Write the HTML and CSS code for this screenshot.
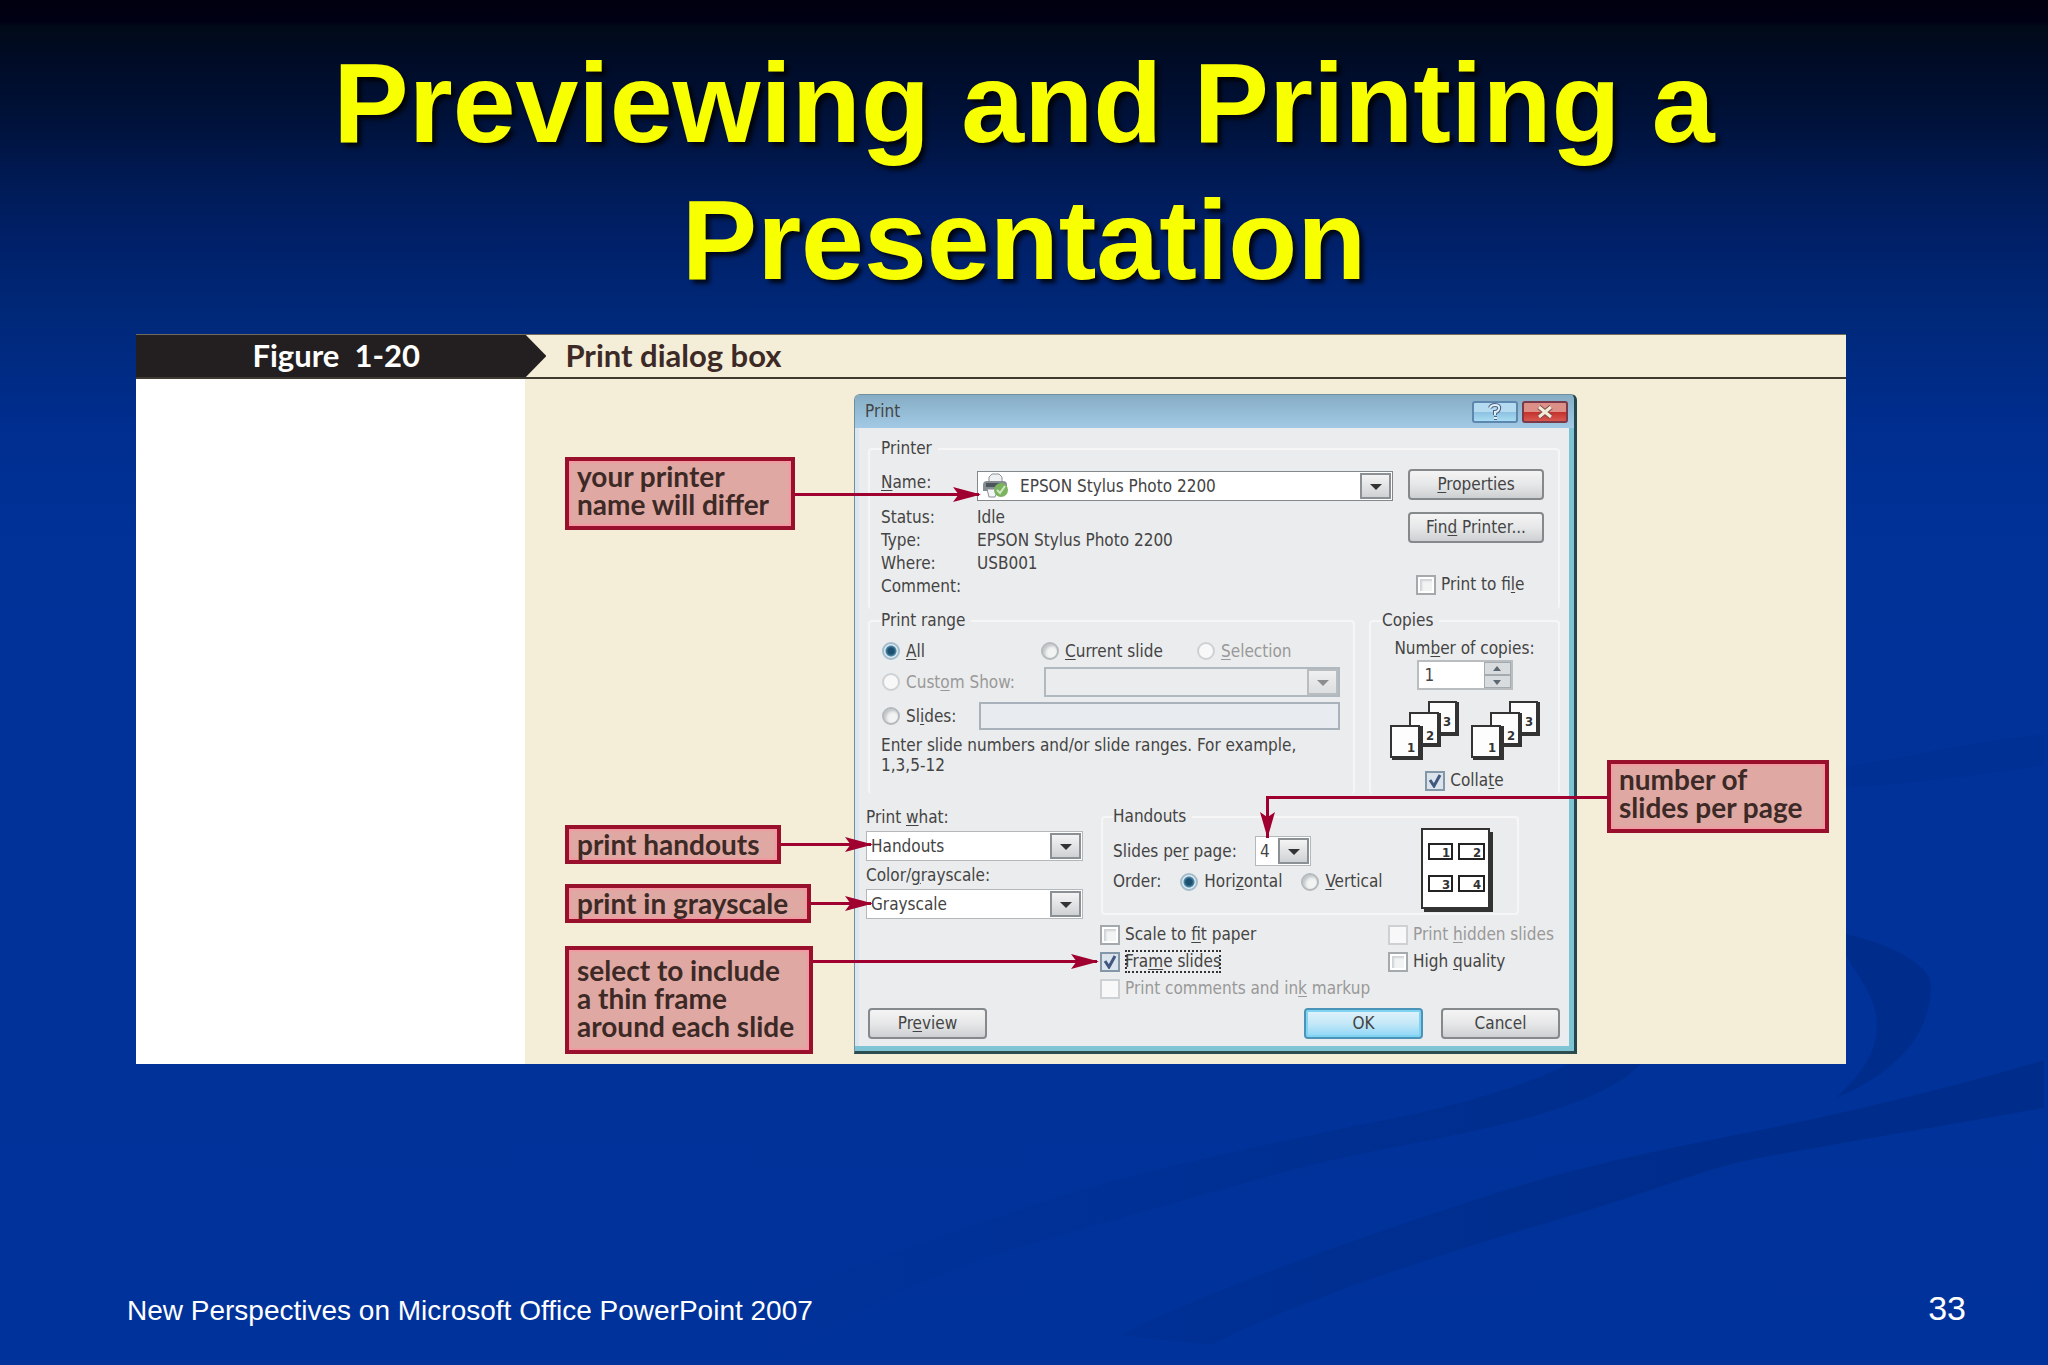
FILE: index.html
```html
<!DOCTYPE html>
<html lang="en">
<head>
    <meta charset="UTF-8">
    <meta name="viewport" content="width=device-width, initial-scale=1.0">
    <title>Previewing and Printing a Presentation</title>
    <link rel="stylesheet" href="styles.css">
</head>
<body>
    <svg class="swirls" viewBox="0 0 2048 1365" preserveAspectRatio="none" aria-hidden="true">
        <defs>
            <linearGradient id="fade" gradientUnits="userSpaceOnUse" x1="760" y1="0" x2="1700" y2="0">
                <stop offset="0" stop-color="#002d8c" stop-opacity="0"/>
                <stop offset="1" stop-color="#002d8c"/>
            </linearGradient>
        </defs>
        <path d="M1846 934 C1905 948 1931 970 1931 985 C1931 1045 1880 1080 1836 1098 C1865 1070 1880 1050 1876 1015 C1872 990 1850 965 1846 955 Z" fill="#002d8c"/>
        <path d="M2044 1060 C1960 1085 1850 1112 1760 1130 S1580 1165 1480 1198 S1220 1285 1120 1335 L1210 1345 C1290 1305 1420 1260 1540 1225 S1700 1170 1750 1160 S1950 1125 2044 1108 Z" fill="url(#fade)"/>
        <path d="M1580 1058 C1530 1085 1460 1105 1385 1120 S1140 1170 1050 1200 S780 1285 700 1340 L790 1360 C850 1310 950 1265 1060 1235 S1280 1170 1370 1152 S1610 1110 1645 1058 Z" fill="url(#fade)"/>
        <path d="M1846 767 C1920 755 1980 740 2044 735 L2044 765 C1980 775 1900 785 1846 787 Z" fill="#002d8c" opacity="0.4"/>
    </svg>

    <main class="slide">
        <h1>Previewing and Printing a<br>Presentation</h1>

        <figure class="figure">
            <figcaption class="figure-header">
                <span class="figure-number">Figure&nbsp; 1-20</span>
                <span class="figure-title">Print dialog box</span>
            </figcaption>

            <div class="figure-body">
                <div class="blank"></div>

                <div class="callouts">
                    <p class="callout printer-note">your printer<br>name will differ
                        <span class="arrow"></span></p>
                    <p class="callout handouts-note">print handouts
                        <span class="arrow"></span></p>
                    <p class="callout grayscale-note">print in grayscale
                        <span class="arrow"></span></p>
                    <p class="callout frame-note">select to include<br>a thin frame<br>around each slide
                        <span class="arrow"></span></p>
                </div>

                <form class="dialog">
                    <div class="titlebar">
                        <span class="dialog-title">Print</span>
                        <button type="button" class="help-btn" aria-label="Help">
                            <svg width="14" height="18" viewBox="0 0 14 18"><path d="M2 5 Q3 2 7 2 Q12 2 11 6 Q10 9 7 9 V12 M6 15 H9" fill="none" stroke="#4a6288" stroke-width="4"/><path d="M2 5 Q3 2 7 2 Q12 2 11 6 Q10 9 7 9 V12 M6 15 H9" fill="none" stroke="#e4eef6" stroke-width="2"/></svg>
                        </button>
                        <button type="button" class="close-btn" aria-label="Close">
                            <svg width="18" height="14" viewBox="0 0 18 14"><path d="M3 2 L15 12 M15 2 L3 12" stroke="#7c4a4a" stroke-width="5"/><path d="M3 2 L15 12 M15 2 L3 12" stroke="#f3ecd8" stroke-width="3"/></svg>
                        </button>
                    </div>

                    <div class="dialog-body">
                        <fieldset class="printer-group">
                            <legend>Printer</legend>
                            <div class="printer-info">
                                <label for="printer-name"><u>N</u>ame:</label>
                                <span class="select printer-select">
                                    <select id="printer-name"><option>EPSON Stylus Photo 2200</option></select>
                                    <svg class="printer-icon" width="28" height="26" viewBox="0 0 28 26">
                                        <path d="M8 9 V4 L11 1 H18 L21 4 V9" fill="#eef0f2" stroke="#8b9196"/>
                                        <path d="M2 12 Q2 8 6 8 H22 Q26 8 26 12 V18 H2 Z" fill="#858d92"/>
                                        <path d="M5 10 H20 V14 H5 Z" fill="#4c555b"/>
                                        <path d="M6 16 H17 L14 24 H8 Z" fill="#f4f6f8" stroke="#8b9196"/>
                                        <circle cx="20" cy="17" r="7" fill="#7bb35e"/>
                                        <path d="M16 17 L19 20 L24 13" fill="none" stroke="#d3e8c4" stroke-width="2"/>
                                    </svg>
                                </span>
                                <span>Status:</span><span>Idle</span>
                                <span>Type:</span><span>EPSON Stylus Photo 2200</span>
                                <span>Where:</span><span>USB001</span>
                                <span>Comment:</span><span></span>
                            </div>
                            <div class="printer-actions">
                                <button type="button" class="btn"><span><u>P</u>roperties</span></button>
                                <button type="button" class="btn"><span>Fin<u>d</u> Printer...</span></button>
                                <label class="check"><input type="checkbox"><span>Print to fi<u>l</u>e</span></label>
                            </div>
                        </fieldset>

                        <div class="range-row">
                            <fieldset class="range-group">
                                <legend>Print range</legend>
                                <div class="range-options">
                                    <label class="check"><input type="radio" name="range" checked><span><u>A</u>ll</span></label>
                                    <label class="check"><input type="radio" name="range"><span><u>C</u>urrent slide</span></label>
                                    <label class="check disabled"><input type="radio" name="range" disabled><span><u>S</u>election</span></label>
                                </div>
                                <div class="range-line">
                                    <label class="check disabled"><input type="radio" name="range" disabled><span>Cust<u>o</u>m Show:</span></label>
                                    <span class="select disabled-select"><select aria-label="Custom show" disabled></select></span>
                                </div>
                                <div class="range-line">
                                    <label class="check"><input type="radio" name="range"><span>Sl<u>i</u>des:</span></label>
                                    <input type="text" class="slides-input" aria-label="Slide numbers">
                                </div>
                                <p class="hint">Enter slide numbers and/or slide ranges. For example,<br>1,3,5-12</p>
                            </fieldset>

                            <fieldset class="copies-group">
                                <legend>Copies</legend>
                                <label for="copies">Num<u>b</u>er of copies:</label>
                                <span class="spinner">
                                    <input type="text" id="copies" value="1">
                                    <span class="spin-buttons">
                                        <button type="button" aria-label="More copies"><svg width="10" height="6" viewBox="0 0 10 6"><path d="M5 0 L9 5 H1 Z" fill="#5d6972"/></svg></button>
                                        <button type="button" aria-label="Fewer copies"><svg width="10" height="6" viewBox="0 0 10 6"><path d="M5 6 L9 1 H1 Z" fill="#5d6972"/></svg></button>
                                    </span>
                                </span>
                                <svg class="collate-icon" width="152" height="60" viewBox="0 0 152 60">
                                    <g id="pages" fill="#fdfdfd" stroke="#333" stroke-width="2">
                                        <path d="M67 2 H69 V34 H42 V32" fill="#333"/>
                                        <rect x="40" y="1" width="27" height="31"/>
                                        <path d="M49 13 H51 V45 H24 V43" fill="#333"/>
                                        <rect x="21" y="12" width="28" height="31"/>
                                        <path d="M31 26 H33 V58 H4 V56" fill="#333"/>
                                        <rect x="2" y="25" width="28" height="31"/>
                                    </g>
                                    <use href="#pages" x="81"/>
                                    <g class="page-digits">
                                        <text x="54" y="25">3</text><text x="37" y="39">2</text><text x="18" y="51">1</text>
                                        <text x="136" y="25">3</text><text x="118" y="39">2</text><text x="99" y="51">1</text>
                                    </g>
                                </svg>
                                <label class="check"><input type="checkbox" checked><span>Colla<u>t</u>e</span></label>
                            </fieldset>
                        </div>

                        <div class="output-row">
                            <div class="output-selects">
                                <label for="print-what">Print <u>w</u>hat:</label>
                                <span class="select"><select id="print-what"><option>Handouts</option></select></span>
                                <label for="color-mode">Color/<u>g</u>rayscale:</label>
                                <span class="select"><select id="color-mode"><option>Grayscale</option></select></span>
                            </div>

                            <fieldset class="handouts-group">
                                <legend>Handouts</legend>
                                <div class="handout-options">
                                    <div class="per-page">
                                        <label for="per-page">Slides pe<u>r</u> page:</label>
                                        <span class="select small-select"><select id="per-page"><option>4</option></select></span>
                                    </div>
                                    <div class="order">
                                        <span>Order:</span>
                                        <label class="check"><input type="radio" name="order" checked><span>Hori<u>z</u>ontal</span></label>
                                        <label class="check"><input type="radio" name="order"><span><u>V</u>ertical</span></label>
                                    </div>
                                </div>
                                <svg class="layout-icon" width="72" height="84" viewBox="0 0 72 84">
                                    <path d="M3 4 H72 V84 H3 Z" fill="#333"/>
                                    <rect x="1" y="1" width="67" height="79" fill="#fff" stroke="#333" stroke-width="2"/>
                                    <g fill="#fff" stroke="#222" stroke-width="2">
                                        <rect x="8" y="16" width="23" height="15"/>
                                        <rect x="38" y="16" width="25" height="15"/>
                                        <rect x="8" y="48" width="23" height="15"/>
                                        <rect x="38" y="48" width="25" height="15"/>
                                    </g>
                                    <g class="page-digits">
                                        <text x="21" y="29">1</text><text x="52" y="29">2</text>
                                        <text x="21" y="61">3</text><text x="52" y="61">4</text>
                                    </g>
                                </svg>
                            </fieldset>
                        </div>

                        <div class="check-grid">
                            <label class="check"><input type="checkbox"><span>Scale to <u>f</u>it paper</span></label>
                            <label class="check disabled"><input type="checkbox" disabled><span>Print <u>h</u>idden slides</span></label>
                            <label class="check focused"><input type="checkbox" checked><span>Fra<u>m</u>e slides</span></label>
                            <label class="check"><input type="checkbox"><span>High <u>q</u>uality</span></label>
                            <label class="check disabled"><input type="checkbox" disabled><span>Print comments and in<u>k</u> markup</span></label>
                        </div>

                        <div class="dialog-buttons">
                            <button type="button" class="btn preview-btn"><span>Pr<u>e</u>view</span></button>
                            <button type="submit" class="btn ok-btn">OK</button>
                            <button type="button" class="btn">Cancel</button>
                        </div>
                    </div>
                </form>

                <div class="callouts-right">
                    <p class="callout pages-note">number of<br>slides per page
                        <span class="arrow-elbow"></span></p>
                </div>
            </div>
        </figure>

        <footer class="slide-footer">
            <span>New Perspectives on Microsoft Office PowerPoint 2007</span>
            <span class="page-number">33</span>
        </footer>
    </main>
</body>
</html>
```
FILE: styles.css
```css
* {
    margin: 0;
    padding: 0;
    box-sizing: border-box;
}

body {
    min-height: 100vh;
    background: linear-gradient(#000010 0, #000014 22px, #000a18 26px, #000c28 65px, #00123a 120px, #001a54 180px, #002068 240px, #002878 310px, #002e90 430px, #003298 560px, #00329b 100%);
    font-family: "Liberation Sans", Arial, sans-serif;
}

.swirls {
    position: absolute;
    top: 0;
    left: 0;
    width: 100%;
    height: 100%;
}

.slide {
    position: relative;
    min-height: 100vh;
    display: flex;
    flex-direction: column;
}

h1 {
    padding-top: 35px;
    color: #f8ff00;
    font-size: 113px;
    line-height: 137px;
    text-align: center;
    text-shadow: 4px 4px 4px rgba(0, 0, 0, 0.8);
}

/* Figure */

.figure {
    margin: 25px 202px 0 136px;
    background: #f4edd8;
    font-family: Lato, "Open Sans", sans-serif;
    font-weight: bold;
    color: #3d2a26;
}

.figure-header {
    display: flex;
    height: 45px;
    border-top: 1px solid #6e6a5c;
    border-bottom: 2px solid #3f3a30;
    font-size: 31px;
    line-height: 40px;
}

.figure-number {
    width: 24%;
    padding-right: 10px;
    background: #231f20;
    clip-path: polygon(0 0, 95% 0, 100% 50%, 95% 100%, 0 100%);
    color: #fff;
    text-align: center;
}

.figure-title {
    padding-left: 19px;
}

.figure-body {
    display: grid;
    grid-template-columns: 389fr 329fr 723fr 269fr;
}

.blank {
    background: #fff;
}

.callouts {
    display: flex;
    flex-direction: column;
    align-items: flex-start;
    padding: 78px 0 0 40px;
}

.callout {
    position: relative;
    z-index: 1;
    margin-bottom: 20px;
    padding: 1px 8px 2px;
    border: 4px solid #99102c;
    background: #dfa8a3;
    box-shadow: inset 0 0 3px 1px #ff8fa0;
    font-size: 28px;
    line-height: 28px;
    white-space: nowrap;
}

.printer-note {
    min-width: 230px;
    margin-bottom: 295px;
    padding-bottom: 8px;
}

.handouts-note {
    min-width: 216px;
}

.grayscale-note {
    min-width: 246px;
}

.frame-note {
    min-width: 248px;
    margin: 3px 0 0;
    padding: 6px 8px 10px;
}

.callouts-right {
    padding: 381px 0 0 30px;
}

.pages-note {
    width: fit-content;
    min-width: 222px;
    padding-bottom: 8px;
}

.arrow {
    position: absolute;
    left: calc(100% + 4px);
    bottom: 14px;
    height: 3px;
    background: #a00030;
}

.arrow::after {
    content: "";
    position: absolute;
    right: -2px;
    top: -6px;
    width: 28px;
    height: 15px;
    background: #a00030;
    clip-path: polygon(0 0, 100% 50%, 0 100%, 20% 50%);
}

.printer-note .arrow { width: 184px; bottom: 30px; }
.handouts-note .arrow { width: 90px; }
.grayscale-note .arrow { width: 60px; }
.frame-note .arrow { width: 284px; bottom: 87px; }

.arrow-elbow {
    position: absolute;
    right: calc(100% + 4px);
    top: 32px;
    width: 341px;
    height: 42px;
    border-top: 3px solid #a00030;
    border-left: 3px solid #a00030;
}

.arrow-elbow::after {
    content: "";
    position: absolute;
    left: -9px;
    bottom: 0;
    width: 15px;
    height: 26px;
    background: #a00030;
    clip-path: polygon(0 0, 50% 20%, 100% 0, 50% 100%);
}

/* Print dialog */

.dialog {
    align-self: start;
    margin: 15px 0 10px;
    border: 1px solid #6f8f9f;
    border-right: 3px solid #24474f;
    border-bottom: 3px solid #2d4c50;
    border-radius: 6px 6px 0 0;
    background: #ebeced;
    box-shadow: inset -5px -5px 0 #7fc4d4, inset 4px 0 0 #dce6ef;
    font-family: "DejaVu Sans Condensed", "Noto Sans", sans-serif;
    font-size: 17px;
    font-weight: normal;
    line-height: 23px;
    color: #444;
}

.dialog u {
    text-underline-offset: 2px;
}

.dialog input,
.dialog select,
.dialog button {
    font: inherit;
    color: inherit;
}

.titlebar {
    display: flex;
    align-items: center;
    gap: 4px;
    height: 33px;
    padding: 0 6px 0 10px;
    border-radius: 5px 5px 0 0;
    background: linear-gradient(#86adc4, #a2cae6);
}

.dialog-title {
    flex: 1;
}

.help-btn,
.close-btn {
    display: flex;
    align-items: center;
    justify-content: center;
    width: 46px;
    height: 22px;
    border: 2px solid #5d87ae;
    border-radius: 3px;
    background: linear-gradient(#b5dbf0 50%, #8cc0e0 50%, #a8dcf2);
}

.close-btn {
    border-color: #7a3a48;
    background: linear-gradient(#dc9088 50%, #c4302c 50%, #d85850);
}

.dialog-body {
    padding: 9px 14px 12px 13px;
}

fieldset {
    min-width: 0;
    border: 2px solid #f6f6f6;
    border-radius: 4px;
}

legend {
    padding-right: 6px;
}

.printer-group {
    display: flex;
    justify-content: space-between;
    height: 172px;
    padding: 11px 14px 0 11px;
    border-bottom: 0;
}

.printer-info {
    display: grid;
    grid-template-columns: 96px 416px;
    grid-template-rows: 35px repeat(4, 23px);
    align-content: start;
}

.printer-actions {
    display: flex;
    flex-direction: column;
    width: 136px;
    gap: 12px;
    margin-top: -2px;
}

.printer-actions .check {
    margin: 18px 0 0 8px;
}

.select {
    position: relative;
    display: block;
    height: 30px;
}

.select select {
    display: block;
    appearance: none;
    width: 100%;
    height: 100%;
    padding: 0 30px 0 4px;
    border: 1px solid #b4b8ba;
    background: #fff;
    border-radius: 0;
}

.select::after {
    content: "";
    position: absolute;
    top: 2px;
    right: 2px;
    bottom: 2px;
    width: 27px;
    border: 2px solid #8b9094;
    background: url('data:image/svg+xml,<svg xmlns="http://www.w3.org/2000/svg" width="12" height="7"><path d="M0 1H12L6 7Z" fill="%23333"/></svg>') center no-repeat, linear-gradient(#f4f4f4, #cfd2d4);
    pointer-events: none;
}

.printer-select select {
    padding-left: 42px;
    border-color: #83888c;
}

.printer-icon {
    position: absolute;
    left: 4px;
    top: 2px;
}

.btn {
    width: 119px;
    height: 31px;
    border: 2px solid #85898c;
    border-radius: 4px;
    background: linear-gradient(#f4f4f4, #e6e7e8 50%, #cdd0d2);
}

.printer-actions .btn {
    width: 100%;
}

.check {
    display: flex;
    align-items: center;
    gap: 5px;
    white-space: nowrap;
}

.check.disabled {
    color: #999;
}

.check input {
    appearance: none;
    width: 20px;
    height: 20px;
    border: 2px solid #a3a9ad;
    background: #f2f3f3;
    box-shadow: inset 0 0 0 2px #fff, inset 4px 4px 2px 0 #cfd3d5;
}

.check input[type="radio"] {
    width: 18px;
    height: 18px;
    margin: 0 1px;
    border-color: #b4b9bc;
    border-radius: 50%;
    box-shadow: inset 2px 2px 3px #bfc3c6;
}

.check input[type="radio"]:checked {
    border-color: #a3bccb;
    background: radial-gradient(circle, #1d4f70 0 3px, #4c86a6 5px, #dcebf3 6px);
    box-shadow: none;
}

.check input[type="checkbox"]:checked {
    background: url('data:image/svg+xml,<svg xmlns="http://www.w3.org/2000/svg" width="14" height="14"><path d="M2 6L6 12L12 1" fill="none" stroke="%23405880" stroke-width="3"/></svg>') center no-repeat, #dbe4ec;
    box-shadow: none;
    border-color: #8497a8;
}

.check input:disabled,
.check input[type="radio"]:disabled {
    border-color: #ced1d3;
    background: #f8f8f8;
    box-shadow: none;
}

.range-row {
    display: flex;
    justify-content: space-between;
}

.range-group {
    width: 487px;
    height: 185px;
    padding: 5px 13px 0 11px;
    border-bottom: 0;
}

.range-options {
    display: grid;
    grid-template-columns: 159px 156px auto;
    height: 28px;
}

.range-line {
    display: flex;
    align-items: center;
    justify-content: space-between;
    height: 34px;
}

.disabled-select {
    width: 296px;
}

.disabled-select select {
    border: 2px solid #b0b8c0;
    background: #eaecee;
    opacity: 1;
}

.disabled-select::after {
    opacity: 0.5;
}

.slides-input {
    width: 361px;
    height: 28px;
    border: 2px solid #a9b2ba;
    background: #e8ebef;
}

.hint {
    padding-top: 2px;
    line-height: 20px;
    white-space: nowrap;
}

.copies-group {
    display: flex;
    flex-direction: column;
    align-items: center;
    width: 191px;
    height: 185px;
    padding-top: 5px;
    border-bottom: 0;
}

.copies-group legend {
    margin-left: 11px;
}

.spinner {
    display: flex;
    width: 96px;
    height: 30px;
    border: 2px solid #b9bdc0;
    background: #fff;
}

.spinner input {
    flex: 1;
    min-width: 0;
    padding-left: 6px;
    border: 0;
    background: none;
}

.spin-buttons {
    display: grid;
    width: 27px;
}

.spin-buttons button {
    display: flex;
    align-items: center;
    justify-content: center;
    border: 1px solid #a4abb0;
    background: #d9dcde;
}

.collate-icon {
    margin: 11px 0 8px;
}

.page-digits {
    font-size: 13px;
    font-weight: bold;
    fill: #333;
}

.output-row {
    display: flex;
    gap: 18px;
    margin-top: 9px;
}

.output-selects {
    width: 217px;
    margin-left: -2px;
}

.output-selects label {
    display: block;
    line-height: 28px;
}

.handouts-group {
    display: flex;
    justify-content: space-between;
    width: 418px;
    height: 110px;
    margin-top: 2px;
    padding: 0 24px 0 10px;
}

.handout-options {
    padding-top: 8px;
}

.per-page {
    display: flex;
    justify-content: space-between;
    align-items: center;
    width: 198px;
}

.small-select {
    width: 56px;
}

.order {
    display: flex;
    gap: 18px;
    margin-top: 4px;
}

.check-grid {
    display: grid;
    grid-template-columns: 288px auto;
    row-gap: 4px;
    padding: 4px 0 0 232px;
}

.focused span {
    outline: 2px dotted #333;
    outline-offset: -2px;
}

.dialog-buttons {
    display: flex;
    gap: 18px;
    margin-top: 8px;
}

.preview-btn {
    margin-right: auto;
}

.ok-btn {
    border-color: #4b93b8;
    background: linear-gradient(#e2f3fb, #c4e8f8 50%, #8dd6f7);
    box-shadow: inset 0 0 0 2px #7fd4f2;
}

/* Slide footer */

.slide-footer {
    display: flex;
    justify-content: space-between;
    align-items: baseline;
    margin-top: auto;
    padding: 0 82px 34px 127px;
    color: #fff;
    font-size: 28px;
    line-height: 40px;
}

.page-number {
    font-size: 34px;
}
```
